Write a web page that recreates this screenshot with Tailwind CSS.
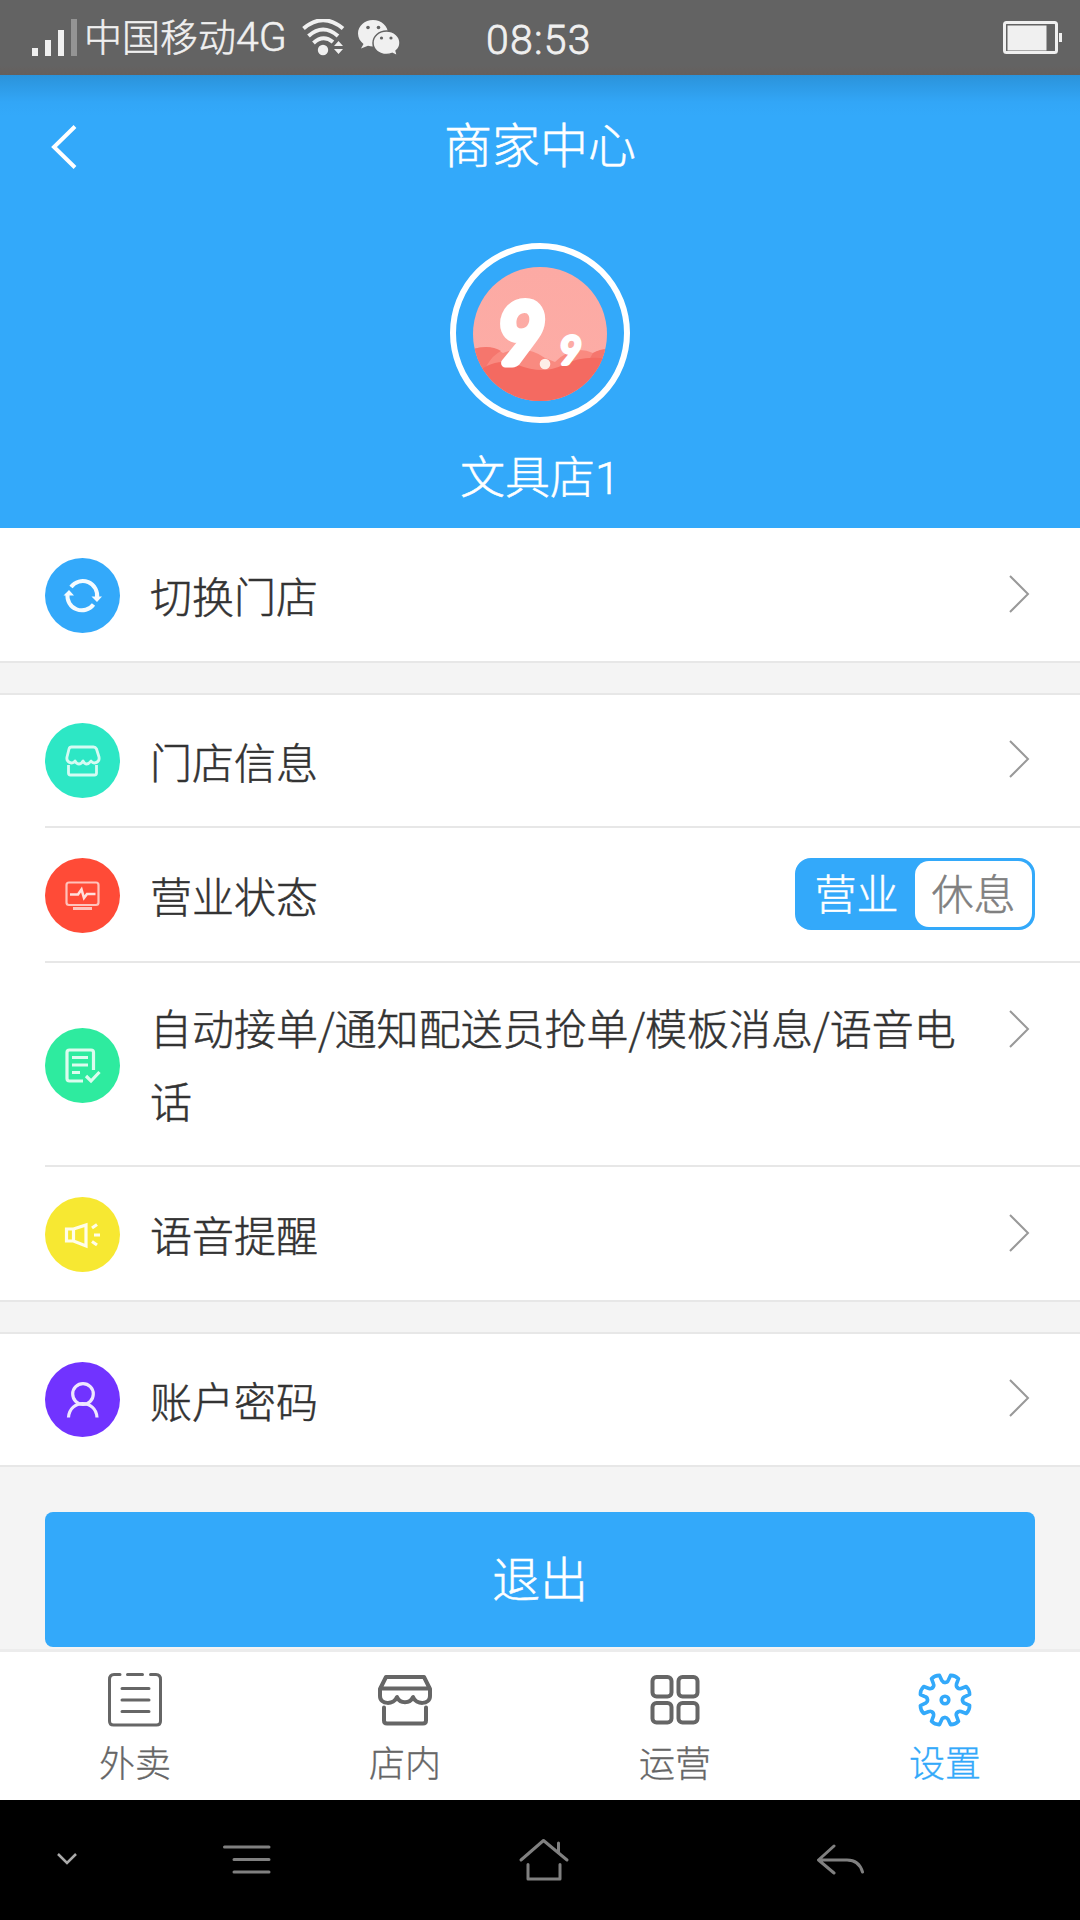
<!DOCTYPE html>
<html lang="zh-CN">
<head>
<meta charset="utf-8">
<title>商家中心</title>
<script src="https://cdn.jsdelivr.net/npm/@tailwindcss/browser@4"></script>
</head>
<body class="flex h-[1920px] w-[1080px] flex-col overflow-hidden bg-[#f4f4f4] font-['Noto_Sans_CJK_SC',sans-serif] text-[42px] font-light text-[#333] [-webkit-text-stroke:0.5px]">

<!-- status bar -->
<div class="flex h-[75px] shrink-0 items-center bg-linear-to-b from-[#636363] from-88% to-[#665f5b] pr-[17px] pl-8 text-[#f0f0f0]">
  <svg class="h-[38px] w-[46px]" viewBox="0 0 46 38" fill="#f0f0f0"><path d="M0 29h6v8H0zM13 21h6v16h-6zM26 11h6v26h-6z"/><path fill="#949494" d="M39 0h6v37h-6z"/></svg>
  <span class="ml-[6px] w-[214px] pb-1 text-[38px] leading-[70px] whitespace-nowrap">中国移动<span class="font-[Roboto] text-[41px]">4G</span></span>
  <svg class="ml-1 h-[38px] w-[44px]" viewBox="0 0 44 38" fill="none" stroke="#f0f0f0" stroke-width="4"><path d="M1.500 9.500Q21-7 41 9.500M6.500 17Q21 4 36 17M11.500 24Q21 15 31 23"/><circle cx="21" cy="31" r="5.200" fill="#f0f0f0" stroke="none"/><path fill="#f0f0f0" stroke="none" d="M36.500 22l4.500 5h-9zM36.500 35l-4.500-5h9z"/></svg>
  <svg class="ml-3 h-[38px] w-[44px]" viewBox="0 0 44 38"><path fill="#f0f0f0" d="M15 1C6.700 1 0 7 0 14.500c0 4.300 2.200 8 5.500 10.400L3 29.500l7-2.700c1.600.4 3.300.7 5 .7 8.300 0 15-6 15-13.200S23.300 1 15 1z"/><circle cx="10" cy="8.500" r="1.800" fill="#636363"/><circle cx="20.500" cy="8.500" r="1.800" fill="#636363"/><path fill="#f0f0f0" stroke="#636363" stroke-width="1.500" d="M28.500 12C21 12 15 17.400 15 24s6 11.500 13.500 11.500c2 0 3.900-.4 5.600-1.100l5.500 2.600-1.500-5.100c2.400-2.100 3.900-4.800 3.900-7.900C42 17.400 36 12 28.500 12z"/><circle cx="23.500" cy="19" r="1.600" fill="#636363"/><circle cx="33" cy="19" r="1.600" fill="#636363"/></svg>
  <span class="ml-[84px] pt-1 font-[Roboto] text-[41px] leading-[70px] tracking-[1.2px] [-webkit-text-stroke:0.8px]">08:53</span>
  <svg class="ml-auto h-[34px] w-[60px]" viewBox="0 0 60 34"><rect x="1.500" y="1.500" width="52" height="30" rx="2" fill="none" stroke="#f0f0f0" stroke-width="3"/><path fill="#f0f0f0" d="M4.500 4.500h39v25h-39zM56 12h3v9h-3z"/></svg>
</div>

<!-- header -->
<header class="flex h-[453px] shrink-0 flex-col items-center bg-linear-to-b from-[#2b93da] from-0% via-[#32a6f7] via-6% to-[#33a9fa] to-9% text-white">
  <div class="grid h-36 w-full grid-cols-[120px_1fr_120px] items-center">
    <svg class="ml-[50px] h-11 w-7" viewBox="0 0 28 44" fill="none" stroke="#fff" stroke-width="4"><path d="M25 1.500L4 22l21 20.500"/></svg>
    <h1 class="pb-[9px] text-center text-[48px] leading-[135px]">商家中心</h1>
  </div>
  <div class="mt-[24px] flex size-[180px] items-center justify-center rounded-full border-6 border-white pt-[2px]">
    <svg class="size-[134px]" viewBox="0 0 134 134">
      <defs>
        <clipPath id="disc"><circle cx="67" cy="67" r="67"/></clipPath>
        <linearGradient id="pink" x1="0" y1="0" x2="0" y2="1"><stop offset="0" stop-color="#fcaaa4"/><stop offset="1" stop-color="#fdada6"/></linearGradient>
      </defs>
      <g clip-path="url(#disc)">
        <path fill="url(#pink)" d="M0 0h134v134H0z"/>
        <path fill="#f98a80" d="M0 82q17-5 30 4 23-9 42 5l10 4q18-18 38-9 6-3 14-3v51H0z"/>
        <path fill="#f5766d" d="M0 82q17-5 28 2-8 4-14 14L0 134zM120 86q7-4 14-4v40l-22-24q5-6 8-12z"/>
        <path fill="#f46a61" d="M0 110Q20 88 45 98t45 0 44-6v42H0z"/>
      </g>
      <g class="font-[Lato] font-normal italic" fill="#fff" stroke="#fff" stroke-linejoin="round">
        <text x="24" y="96" font-size="83" stroke-width="9" class="[-webkit-text-stroke:9px_#fff]">9</text>
        <text x="86" y="97" font-size="39" stroke-width="4" class="[-webkit-text-stroke:4px_#fff]">9</text>
      </g>
      <circle cx="72" cy="97" r="5.300" fill="#fdeee8"/>
    </svg>
  </div>
  <p class="mt-[19px] text-[45px] leading-[66px]">文具店<span class="font-[Roboto]">1</span></p>
</header>

<!-- switch store -->
<section class="shrink-0 bg-white">
  <div class="flex h-[135px] items-center border-b-2 border-[#e7e7e7] pr-[50px] pl-[45px]">
    <svg class="mt-[2px] size-[75px]" viewBox="0 0 75 75"><circle cx="37.500" cy="37.500" r="37.500" fill="#33a9fa"/><g fill="none" stroke="#f4fbff" stroke-width="4"><path d="M26 29a14.500 14.500 0 0 1 26 11M48.500 46.500A14.500 14.500 0 0 1 22.500 36"/></g><path fill="#f4fbff" d="M46.500 38.500h10.500l-5 5.500zM18.500 37.500l5.500-5.500 5 5.500z"/></svg>
    <span class="ml-[30px]">切换门店</span>
    <svg class="mb-[2px] ml-auto h-10 w-[22px]" viewBox="0 0 22 40" fill="none" stroke="#999" stroke-width="2"><path d="M2 2l18 18L2 38"/></svg>
  </div>
</section>

<!-- store settings -->
<section class="mt-[30px] shrink-0 border-t-2 border-[#e7e7e7] bg-white">
  <div class="ml-[45px] flex h-[133px] items-center border-b-2 border-[#e7e7e7] pr-[50px]">
    <svg class="size-[75px]" viewBox="0 0 75 75"><circle cx="37.500" cy="37.500" r="37.500" fill="#2de7c5"/><g fill="none" stroke="#d5fbf3" stroke-width="2.800" stroke-linejoin="round"><path d="M26.500 24h22q2 0 3 2l2.500 8c1 5-5 8-8 4-3 4-6 4-8 0-2 4-6 4-8 0-3 4-9 1-8-4l2-8q.5-2 2.500-2zM23.500 42v8q0 2 2 2h24q2 0 2-2v-8"/></g></svg>
    <span class="mb-px ml-[30px]">门店信息</span>
    <svg class="mb-[3px] ml-auto h-10 w-[22px]" viewBox="0 0 22 40" fill="none" stroke="#999" stroke-width="2"><path d="M2 2l18 18L2 38"/></svg>
  </div>
  <div class="ml-[45px] flex h-[135px] items-center border-b-2 border-[#e7e7e7] pr-[45px]">
    <svg class="mt-[2px] size-[75px]" viewBox="0 0 75 75"><circle cx="37.500" cy="37.500" r="37.500" fill="#ff4b37"/><g fill="none" stroke="#ffc3bb" stroke-width="2.200"><rect x="21.500" y="24.500" width="32" height="22.500" rx="2.500"/><path d="M28 50.500h19" stroke-width="3"/><path stroke="#ffe0dc" stroke-width="2.600" d="M25 36.500h8l3.500-5 2.500 8.500 3-4h8.500"/></g></svg>
    <span class="ml-[30px]">营业状态</span>
    <div class="mb-px ml-auto grid h-[72px] w-60 grid-cols-[117px_117px] rounded-2xl border-3 border-[#33a9fa] bg-[#33a9fa] text-center leading-[62px]">
      <span class="text-white">营业</span>
      <span class="rounded-[14px] bg-white text-[#808080]">休息</span>
    </div>
  </div>
  <div class="ml-[45px] flex h-[204px] items-center border-b-2 border-[#e7e7e7] pr-[50px]">
    <svg class="mt-[3px] size-[75px]" viewBox="0 0 75 75"><circle cx="37.500" cy="37.500" r="37.500" fill="#2eeb9f"/><g fill="none" stroke="#dcfcee" stroke-width="3.200"><path d="M48.500 42V24.500q0-2.500-2.500-2.500H24.500Q22 22 22 24.500v26q0 2.500 2.500 2.500H38"/><path d="M27 29.500h16M27 37h16M27 44.500h8M41 48l5 5 8.500-9"/></g></svg>
    <span class="mb-[2px] ml-[30px] w-[820px] leading-[73px]">自动接单/通知配送员抢单/模板消息/语音电话</span>
    <svg class="mb-[71px] ml-auto h-10 w-[22px]" viewBox="0 0 22 40" fill="none" stroke="#999" stroke-width="2"><path d="M2 2l18 18L2 38"/></svg>
  </div>
  <div class="flex h-[135px] items-center border-b-2 border-[#e7e7e7] pr-[50px] pl-[45px]">
    <svg class="mt-[2px] size-[75px]" viewBox="0 0 75 75"><circle cx="37.500" cy="37.500" r="37.500" fill="#f7e832"/><g fill="none" stroke="#fffde9" stroke-width="3.200"><path d="M21.500 32h7v12h-7zM28.500 32l12.500-4v21l-12.500-5M47 31l5-3.500M49 38h6M47 44.500l5 3.500"/></g></svg>
    <span class="ml-[30px]">语音提醒</span>
    <svg class="mb-[2px] ml-auto h-10 w-[22px]" viewBox="0 0 22 40" fill="none" stroke="#999" stroke-width="2"><path d="M2 2l18 18L2 38"/></svg>
  </div>
</section>

<!-- account -->
<section class="mt-[30px] shrink-0 border-y-2 border-[#e7e7e7] bg-white">
  <div class="flex h-[131px] items-center pr-[50px] pl-[45px]">
    <svg class="size-[75px]" viewBox="0 0 75 75"><circle cx="37.500" cy="37.500" r="37.500" fill="#7133ff"/><g fill="none" stroke="#efe7ff" stroke-width="3.200"><circle cx="38" cy="32" r="10.300"/><path d="M23.500 55.500c1-18.500 27.500-18.500 28.500 0"/></g></svg>
    <span class="mb-px ml-[30px]">账户密码</span>
    <svg class="mb-[3px] ml-auto h-10 w-[22px]" viewBox="0 0 22 40" fill="none" stroke="#999" stroke-width="2"><path d="M2 2l18 18L2 38"/></svg>
  </div>
</section>

<button class="mx-[45px] mt-[45px] h-[135px] shrink-0 rounded-lg bg-[#33a9fa] pb-[6px] text-[48px] leading-[129px] font-light text-white">退出</button>

<!-- tab bar -->
<nav class="mt-[2px] grid h-[151px] shrink-0 grid-cols-4 border-t-3 border-[#ececec] bg-white text-[36px] leading-[48px] text-[#666] [-webkit-text-stroke:0.3px]">
  <div class="flex flex-col items-center pt-5">
    <svg class="size-[56px]" viewBox="0 0 56 56" fill="none" stroke="#666" stroke-width="3" stroke-linecap="round"><path d="M13 2.500H7Q2.500 2.500 2.500 7.500v41.500q0 4 4 4h43q4 0 4-4v-41.500Q53.500 2.500 49 2.500h-5.500M20.500 2.500h15M15 16.500h27M15 28h27M15 39.500h27"/></svg>
    <span class="mt-[9px]">外卖</span>
  </div>
  <div class="flex flex-col items-center pt-5">
    <svg class="size-[56px]" viewBox="0 0 56 56" fill="none" stroke="#666" stroke-width="4" stroke-linecap="round" stroke-linejoin="round"><path d="M9 5h38l6 12v7c0 9-14 9-17 1-3 7-13 7-16 0-3 8-17 8-17-1v-7zM4 16.500h48M7 35.500v13q0 3 3 3h36q3 0 3-3v-13"/></svg>
    <span class="mt-[9px]">店内</span>
  </div>
  <div class="flex flex-col items-center pt-5">
    <svg class="size-[56px]" viewBox="0 0 56 56" fill="none" stroke="#666" stroke-width="4"><rect x="5.500" y="5" width="19" height="19.500" rx="4"/><rect x="31.500" y="5" width="19" height="19.500" rx="4"/><rect x="5.500" y="31" width="19" height="19.500" rx="4"/><rect x="31.500" y="31" width="19" height="19.500" rx="4"/></svg>
    <span class="mt-[9px]">运营</span>
  </div>
  <div class="flex flex-col items-center pt-5 text-[#33a9fa]">
    <svg class="size-[56px]" viewBox="-28 -28 56 56" fill="none" stroke="#33a9fa" stroke-width="3.600" stroke-linecap="round" stroke-linejoin="round">
      <defs><path id="tooth" d="M0-17.500Q2.500-17.500 3.200-19.500L5.500-24.600Q10-24.800 13.500-21.300L11.500-16Q11-13.500 12.400-12.400"/></defs>
      <use href="#tooth"/><use href="#tooth" transform="rotate(45)"/><use href="#tooth" transform="rotate(90)"/><use href="#tooth" transform="rotate(135)"/><use href="#tooth" transform="rotate(180)"/><use href="#tooth" transform="rotate(225)"/><use href="#tooth" transform="rotate(270)"/><use href="#tooth" transform="rotate(315)"/>
      <circle r="3.800"/>
    </svg>
    <span class="mt-[9px]">设置</span>
  </div>
</nav>

<!-- system navigation -->
<footer class="flex h-[120px] shrink-0 items-center bg-black">
  <svg class="ml-14 h-4 w-6" viewBox="0 0 24 16" fill="none" stroke="#aaa" stroke-width="2.500"><path d="M2 2l9 9 9-9"/></svg>
  <svg class="ml-[142px] h-8 w-[50px]" viewBox="0 0 50 32" fill="none" stroke="#808080" stroke-width="3" stroke-linecap="round"><path d="M2.500 3H47M12 15.500h35M12 28h35"/></svg>
  <svg class="ml-[246px] h-11 w-[52px]" viewBox="0 0 52 44" fill="none" stroke="#808080" stroke-width="3" stroke-linecap="round" stroke-linejoin="round"><path d="M3 22L25.500 2.500 49 22M40.500 5v9M10 26.500V41h32V26.500"/></svg>
  <svg class="ml-[246px] h-8 w-[50px]" viewBox="0 0 50 32" fill="none" stroke="#808080" stroke-width="3" stroke-linecap="round" stroke-linejoin="round"><path d="M18 2L2.500 16 18 29M2.500 16H31q12 0 15.500 12"/></svg>
</footer>
</body>
</html>
